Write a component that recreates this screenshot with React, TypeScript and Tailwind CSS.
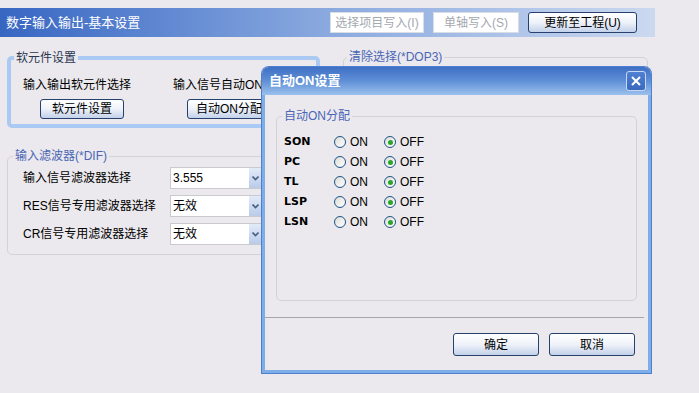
import { ReactNode } from 'react';

const FONT = { fontFamily: '"Liberation Sans", "Noto Sans CJK SC", sans-serif' };

function XpButton({ children, className = '' }: { children: ReactNode; className?: string }) {
  return (
    <div
      className={`flex items-center justify-center rounded-[3px] border border-[#28406e] bg-gradient-to-b from-[#ffffff] via-[#eef2f9] to-[#c3d1ea] text-[12px] text-black ${className}`}
    >
      {children}
    </div>
  );
}

function Radio({ checked }: { checked?: boolean }) {
  return (
    <span className="flex h-[12px] w-[12px] items-center justify-center rounded-full border border-[#1d5386] bg-gradient-to-br from-[#dcdcd6] to-[#ffffff]">
      {checked && <span className="h-[5px] w-[5px] rounded-full bg-[#2aa52a]" />}
    </span>
  );
}

function Select({ value }: { value: string }) {
  return (
    <div className="flex h-[22px] w-[92px] border border-[#c9c9cf] bg-white">
      <div className="flex-1 pl-[2px] pt-[3px] text-[12px] leading-[14px]">{value}</div>
      <div className="flex w-[12px] items-center justify-center bg-gradient-to-b from-[#e3ebf8] to-[#b9cbe8]">
        <svg width="7" height="5" viewBox="0 0 7 5">
          <path d="M0.5 0.5 L3.5 3.5 L6.5 0.5" stroke="#4d6185" strokeWidth="1.6" fill="none" />
        </svg>
      </div>
    </div>
  );
}

const rows = ['SON', 'PC', 'TL', 'LSP', 'LSN'];

export default function App() {
  return (
    <div className="relative h-[393px] w-[699px] overflow-hidden bg-[#ebe9ed] text-black" style={FONT}>
      <div className="pt-[8px]">
        {/* header bar */}
        <div className="flex h-[29px] w-[655px] items-center bg-gradient-to-r from-[#3766c2] via-[#8aa9df] to-[#cbd9f0] pl-[6px]">
          <span className="text-[13px] text-white">数字输入输出-基本设置</span>
          <div className="ml-auto mr-[18px] flex items-center gap-[9px]">
            <div className="flex h-[21px] w-[94px] items-center justify-center border border-[#d8dde6] bg-white text-[12px] text-[#a4a8b0]">
              选择项目写入(I)
            </div>
            <div className="flex h-[21px] w-[86px] items-center justify-center border border-[#d8dde6] bg-white text-[12px] text-[#a4a8b0]">
              单轴写入(S)
            </div>
            <XpButton className="h-[21px] w-[109px]">更新至工程(U)</XpButton>
          </div>
        </div>

        <div className="mt-[14px] flex">
          {/* left column */}
          <div className="ml-[7px] w-[313px]">
            <fieldset className="h-[77px] rounded-[5px] border-4 border-[#aacaf3]">
              <legend className="ml-[3px] px-[2px] text-[12px] leading-[14px] text-[#2a3550]">软元件设置</legend>
              <div className="mt-[13px] flex">
                <div className="w-[162px] pl-[12px]">
                  <div className="text-[12px] leading-[14px]">输入输出软元件选择</div>
                  <XpButton className="ml-[17px] mt-[7px] h-[20px] w-[84px]">软元件设置</XpButton>
                </div>
                {/* this column runs under the dialog, clip it at the dialog edge */}
                <div className="w-[89px] overflow-hidden whitespace-nowrap">
                  <div className="text-[12px] leading-[14px]">输入信号自动ON分配</div>
                  <XpButton className="ml-[14px] mt-[7px] h-[20px] w-[84px]">自动ON分配</XpButton>
                </div>
              </div>
            </fieldset>

            <fieldset className="mt-[21px] h-[106px] rounded-[5px] border border-[#d3d3d7]">
              <legend className="ml-[5px] px-[2px] text-[12px] leading-[14px] text-[#4a66b5]">输入滤波器(*DIF)</legend>
              <div className="mt-[4px] flex flex-col gap-[6px] pl-[15px]">
                {[
                  ['输入信号滤波器选择', '3.555'],
                  ['RES信号专用滤波器选择', '无效'],
                  ['CR信号专用滤波器选择', '无效'],
                ].map(([label, val]) => (
                  <div key={label} className="flex items-center">
                    <span className="w-[147px] text-[12px]">{label}</span>
                    <Select value={val} />
                  </div>
                ))}
              </div>
            </fieldset>
          </div>

          {/* right column */}
          <div className="ml-[23px] w-[305px]">
            <fieldset className="mt-[-1px] h-[100px] rounded-[5px] border border-[#d3d3d7]">
              <legend className="ml-[3px] px-[2px] text-[12px] leading-[14px] text-[#4a66b5]">清除选择(*DOP3)</legend>
            </fieldset>
          </div>
        </div>
      </div>

      {/* modal dialog */}
      <div className="absolute left-[262px] top-[67px] flex h-[306px] w-[389px] flex-col rounded-t-[7px] bg-[#ebe9ed] shadow-[0_0_0_1px_#4d80cf]">
        <div className="flex h-[28px] items-center rounded-t-[7px] bg-gradient-to-b from-[#3f6fc4] via-[#5f8fd6] to-[#9cc0ec] pl-[7px] pr-[5px]">
          <span className="text-[13px] font-bold text-white">自动ON设置</span>
          <div className="ml-auto flex h-[20px] w-[20px] items-center justify-center rounded-[3px] border border-[#c6d8f4] bg-gradient-to-b from-[#4f80d2] to-[#3a69bd]">
            <svg width="12" height="12" viewBox="0 0 12 12">
              <path d="M2 2 L10 10 M10 2 L2 10" stroke="white" strokeWidth="2" />
            </svg>
          </div>
        </div>
        <div className="flex flex-1 flex-col border-x-[3px] border-b-[3px] border-[#7eaee8]">
          <fieldset className="mx-[11px] mt-[14px] h-[192px] rounded-[5px] border border-[#d3d3d7]">
            <legend className="ml-[5px] px-[2px] text-[12px] leading-[14px] text-[#4a66b5]">自动ON分配</legend>
            <div className="mt-[9px] flex flex-col pl-[7px]">
              {rows.map((r) => (
                <div key={r} className="flex h-[20px] items-center text-[12px]">
                  <span className="w-[50px] font-bold" style={{ fontFamily: '"DejaVu Sans", sans-serif', fontSize: '11px' }}>
                    {r}
                  </span>
                  <Radio />
                  <span className="ml-[4px] w-[34px]">ON</span>
                  <Radio checked />
                  <span className="ml-[4px]">OFF</span>
                </div>
              ))}
            </div>
          </fieldset>
          <div className="mt-[16px] mr-[4px] h-[1px] bg-[#a7a7ab]" />
          <div className="mt-[15px] flex justify-end gap-[10px] pr-[13px]">
            <XpButton className="h-[23px] w-[86px]">确定</XpButton>
            <XpButton className="h-[23px] w-[86px]">取消</XpButton>
          </div>
        </div>
      </div>
    </div>
  );
}
